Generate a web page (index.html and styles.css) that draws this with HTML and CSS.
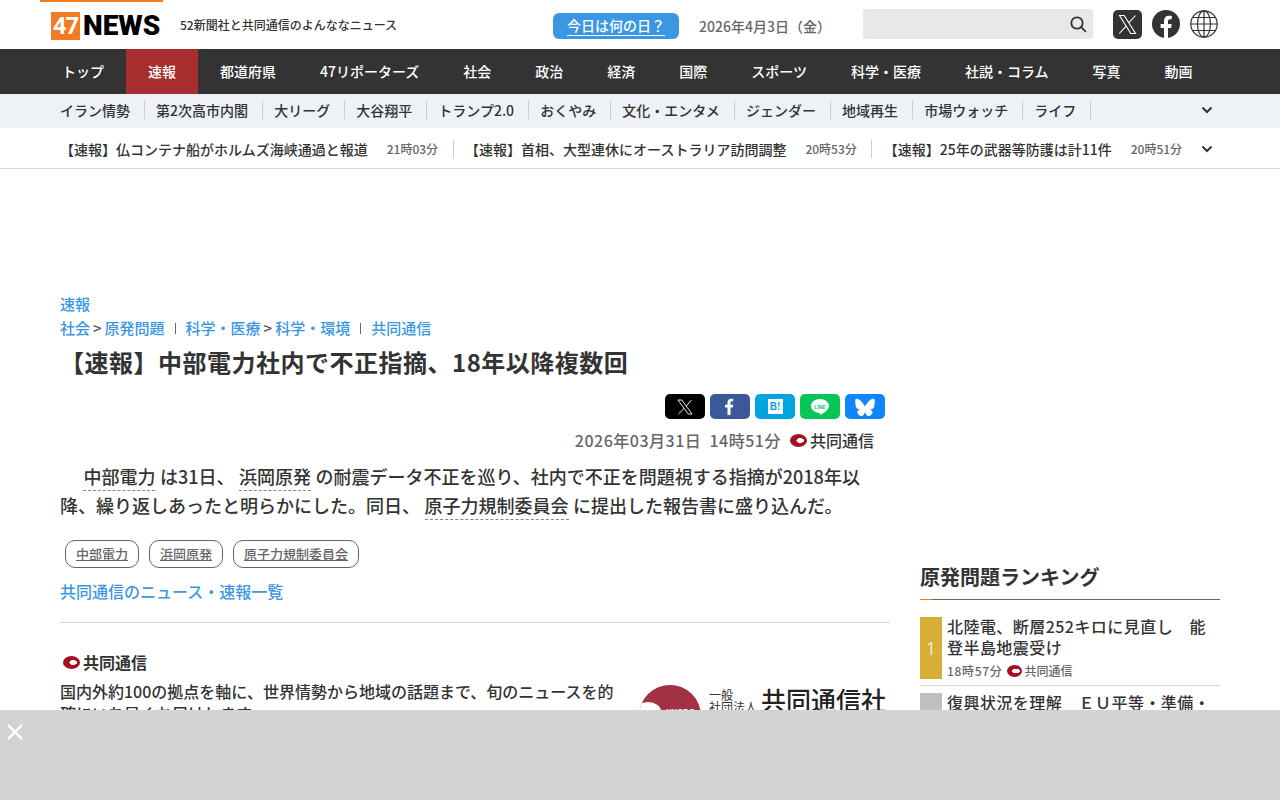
FILE: index.html
```html
<!DOCTYPE html>
<html lang="ja">
<head>
<meta charset="utf-8">
<title>47NEWS</title>
<link rel="stylesheet" href="styles.css">
</head>
<body>
<header class="masthead">
  <div class="logo-wrap">
    <div class="logo"><span class="logo-box">47</span><span class="logo-news">NEWS</span></div>
  </div>
  <p class="tagline">52新聞社と共同通信のよんななニュース</p>
  <a class="today"><span>今日は何の日？</span></a>
  <span class="date">2026年4月3日（金）</span>
  <div class="search">
    <svg width="18" height="18" viewBox="0 0 18 18" fill="none" stroke="#333" stroke-width="1.8"><circle cx="8" cy="8" r="5.7"/><path d="M12.2 12.2 16.4 16.4" stroke-linecap="round"/></svg>
  </div>
  <div class="social">
    <svg width="29" height="29" viewBox="0 0 29 29"><rect width="29" height="29" rx="5" fill="#333"/><path d="M6.500 5.500h4.700l11.300 18h-4.700zM22.500 5.500 15.400 13.200M13.500 15.700 6.300 23.500" fill="none" stroke="#fff" stroke-width="1.100"/></svg>
    <svg width="28" height="28" viewBox="0 0 28 28"><circle cx="14" cy="14" r="14" fill="#333"/><path d="M12 28V18H8.600v-4H12v-3c0-3.500 2-5.300 5.100-5.300 1.400 0 2.700.2 2.700.2v3.400h-1.600c-1.700 0-2.200 1-2.200 2.100V14h3.700l-.6 4h-3.100v10z" fill="#fff"/></svg>
    <svg width="28" height="28" viewBox="0 0 28 28" fill="none" stroke="#333" stroke-width="1.2"><circle cx="14" cy="14" r="13.2"/><ellipse cx="14" cy="14" rx="6.500" ry="13.200"/><path d="M14 .8v26.400M.8 14h26.400M3 7.500h22M3 20.500h22"/></svg>
  </div>
</header>

<nav class="mainnav">
  <a>トップ</a><a class="on">速報</a><a>都道府県</a><a>47リポーターズ</a><a>社会</a><a>政治</a><a>経済</a><a>国際</a><a>スポーツ</a><a>科学・医療</a><a>社説・コラム</a><a>写真</a><a>動画</a>
</nav>

<nav class="subnav">
  <a>イラン情勢</a><a>第2次高市内閣</a><a>大リーグ</a><a>大谷翔平</a><a>トランプ2.0</a><a>おくやみ</a><a>文化・エンタメ</a><a>ジェンダー</a><a>地域再生</a><a>市場ウォッチ</a><a>ライフ</a>
  <svg class="chev" width="12" height="8" viewBox="0 0 12 8" fill="none" stroke="#333" stroke-width="2"><path d="M1.500 1.500 6 6l4.500-4.500"/></svg>
</nav>

<div class="ticker">
  <div class="tick"><b>【速報】仏コンテナ船がホルムズ海峡通過と報道</b><time>21時03分</time></div>
  <div class="tick"><b>【速報】首相、大型連休にオーストラリア訪問調整</b><time>20時53分</time></div>
  <div class="tick last"><b>【速報】25年の武器等防護は計11件</b><time>20時51分</time></div>
  <svg class="chev" width="12" height="8" viewBox="0 0 12 8" fill="none" stroke="#333" stroke-width="2"><path d="M1.500 1.500 6 6l4.500-4.500"/></svg>
</div>

<div class="columns">
  <main class="article">
    <div class="crumb-top"><a>速報</a></div>
    <div class="crumbs"><a>社会</a><i>&gt;</i><a>原発問題</a><u></u><a>科学・医療</a><i>&gt;</i><a>科学・環境</a><u></u><a>共同通信</a></div>
    <h1>【速報】中部電力社内で不正指摘、18年以降複数回</h1>
    <div class="share">
      <span class="sb b-x"><svg width="16" height="16" viewBox="0 0 16 16"><path d="M1 1h3.800l10.200 14h-3.800zM14.600 1 9 7.300M7 9.500 1.400 15" fill="none" stroke="#fff" stroke-width=".9"/></svg></span>
      <span class="sb b-f"><svg width="12" height="17" viewBox="0 0 12 17"><path d="M3.500 17V9.500H1V6.700h2.500V4.600C3.500 2 5 .7 7.300.7c1 0 1.900.1 1.900.1v2.500H8c-1.200 0-1.500.7-1.500 1.500v1.900h2.700l-.4 2.800H6.500V17z" fill="#fff"/></svg></span>
      <span class="sb b-h"><span class="hb">B!</span></span>
      <span class="sb b-l"><svg width="20" height="18" viewBox="0 0 20 18"><path d="M10 1c5 0 9 3 9 7 0 3.500-4.500 7-9 9 .5-1.500.3-2-.8-2.100C4.600 14.500 1 11.500 1 8c0-4 4-7 9-7z" fill="#fff"/><text x="10" y="10.500" class="lt">LINE</text></svg></span>
      <span class="sb b-b"><svg width="20" height="18" viewBox="0 0 20 18"><path d="M4.500 1.800C6.800 3.500 9.200 6.900 10 8.600c.8-1.700 3.200-5.100 5.500-6.800 1.600-1.200 4.300-2.200 4.300.9 0 .6-.4 5.200-.6 5.900-.7 2.500-3.200 3.100-5.500 2.700 4 .7 5 3 2.800 5.200-4.200 4.300-6-1.100-6.500-2.500-.5 1.400-2.300 6.800-6.500 2.500C1.300 14.300 2.300 12 6.300 11.300c-2.300.4-4.800-.2-5.500-2.700C.6 7.900.2 3.300.2 2.700c0-3.100 2.700-2.100 4.300-.9z" fill="#fff"/></svg></span>
    </div>
    <div class="meta"><span class="stamp">2026年03月31日&nbsp;&nbsp;14時51分</span><span class="src"><span class="kyodo"></span>共同通信</span></div>
    <p class="lead"><a>中部電力</a> は31日、 <a>浜岡原発</a> の耐震データ不正を巡り、社内で不正を問題視する指摘が2018年以降、繰り返しあったと明らかにした。同日、 <a>原子力規制委員会</a> に提出した報告書に盛り込んだ。</p>
    <div class="tags"><a>中部電力</a><a>浜岡原発</a><a>原子力規制委員会</a></div>
    <a class="more">共同通信のニュース・速報一覧</a>
    <section class="about">
      <h2><span class="kyodo"></span>共同通信</h2>
      <div class="about-row">
        <p>国内外約100の拠点を軸に、世界情勢から地域の話題まで、旬のニュースを的確にいち早くお届けします。</p>
        <div class="klogo">
          <span class="kdisc"><span class="kword">KYODO</span></span>
          <span class="ksmall">一般<br>社団法人</span>
          <span class="kname">共同通信社</span>
        </div>
      </div>
    </section>
  </main>

  <aside class="side">
    <h2 class="rank-title">原発問題ランキング</h2>
    <article class="rank">
      <div class="num n1">1</div>
      <div class="rank-body">
        <h3>北陸電、断層252キロに見直し　能登半島地震受け</h3>
        <div class="rank-meta"><time>18時57分</time><span class="kyodo sm"></span>共同通信</div>
      </div>
    </article>
    <article class="rank">
      <div class="num n2">2</div>
      <div class="rank-body">
        <h3>復興状況を理解　ＥＵ平等・準備・危機管理担当委員</h3>
      </div>
    </article>
  </aside>
</div>

<div class="overlay"><svg width="18" height="18" viewBox="0 0 18 18" stroke="#fff" stroke-width="2.400"><path d="M2 2l14 14M16 2 2 16"/></svg></div>
</body>
</html>
```

FILE: styles.css
```css
* { box-sizing: border-box; }
html, body { margin: 0; height: 800px; overflow: hidden; background: #fff; }
body { font-family: "Noto Sans CJK JP", "Noto Sans", sans-serif; color: #333; font-weight: 500; }
a { color: inherit; text-decoration: none; }
h1, h2, h3, p { margin: 0; }

.masthead { height: 49px; display: flex; align-items: center; padding-left: 40px; }
.logo-wrap { width: 123px; height: 49px; border-top: 2px solid #f47b20; padding: 10px 0 0 11px; flex: none; }
.logo { display: flex; align-items: center; height: 28px; }
.logo-box { width: 29px; height: 28px; background: #f47b20; color: #fff; font: 700 24px/29px "Roboto", sans-serif; letter-spacing: -1px; text-align: center; }
.logo-news { font: 900 28px/28px "Roboto", sans-serif; color: #000; margin-left: 3px; }
.tagline { font-size: 12px; margin-left: 17px; width: 373px; flex: none; }
.today { width: 126px; height: 26px; background: #3b97e3; border-radius: 6px; color: #fff; font-size: 14px; line-height: 24px; text-align: center; flex: none; margin-top: 2px; }
.today span { display: inline-block; border-bottom: 1px solid #fff; height: 23px; }
.date { width: 184px; padding-left: 20px; font-size: 14px; color: #666; flex: none; margin-top: 2px; }
.search { width: 230px; height: 30px; background: #e8e8e8; border-radius: 3px; display: flex; justify-content: flex-end; align-items: center; padding-right: 6px; flex: none; margin-top: -1px; }
.social { display: flex; gap: 10px; margin-left: 20px; align-items: center; margin-top: -1px; }

.mainnav { height: 45px; background: #333; display: flex; padding-left: 40px; }
.mainnav a { color: #fff; font-size: 14px; line-height: 45px; padding: 0 22px; }
.mainnav a.on { background: #a82d2f; }

.subnav { height: 34px; background: #eef1f6; display: flex; align-items: center; padding: 0 0 2px 47px; position: relative; }
.subnav a { font-size: 14px; line-height: 18px; padding: 0 14px 0 11.100px; border-right: 1px solid #ccc; color: #333; white-space: nowrap; }
.subnav a:first-child { padding-left: 13px; }
.chev { position: absolute; right: 67px; }
.ticker { height: 41px; border-bottom: 1px solid #d8d8d8; display: flex; align-items: center; padding: 1px 0 0 60px; position: relative; }
.tick { display: flex; align-items: center; height: 18px; border-right: 1px solid #ccc; padding-right: 14px; margin-right: 12px; white-space: nowrap; }
.tick.last { border-right: 0; }
.tick b { font-weight: 500; font-size: 14px; color: #333; }
.tick time { font-size: 12px; color: #666; margin-left: 19px; }
.tick:first-child { padding-right: 15px; margin-right: 11px; }
.ticker .chev { top: 17px; }

.columns { display: flex; padding: 123px 60px 0; gap: 30px; }
.article { width: 830px; flex: none; }
.crumb-top, .crumbs { font-size: 15px; line-height: 24px; color: #3b97e3; }
.crumbs { display: flex; align-items: center; }
.crumbs i { font-style: normal; color: #555; margin: 0 3px; }
.crumbs u { width: 1px; height: 11px; background: #666; margin: 0 10px; }
h1 { font-size: 24px; line-height: 36px; font-weight: 700; margin: 4px 0 0; letter-spacing: .5px; }
.share { display: flex; justify-content: flex-end; gap: 5px; margin: 14px 5px 0 0; }
.sb { width: 40px; height: 25px; border-radius: 5px; display: flex; align-items: center; justify-content: center; }
.b-x { background: #000; } .b-f { background: #3b5998; } .b-h { background: #00a4de; } .b-l { background: #06c755; } .b-b { background: #1185fe; }
.hb { width: 15px; height: 15px; background: #fff; color: #00a4de; font: 700 10px/15px "Liberation Sans", sans-serif; text-align: center; }
.lt { font: 700 5px "Liberation Sans", sans-serif; fill: #06c755; text-anchor: middle; }
.meta { display: flex; justify-content: flex-end; align-items: center; font-size: 16px; line-height: 24px; color: #666; margin: 9px 16px 0 0; }
.stamp { letter-spacing: .5px; }
.src { display: flex; align-items: center; color: #333; margin-left: 9px; }
.kyodo { display: inline-block; width: 17px; height: 13px; border-radius: 50%; background: radial-gradient(ellipse 4px 2.500px at 60% 50%, #fff 90%, #a50f1e 100%); margin-right: 3px; flex: none; }
.kyodo.sm { width: 15px; height: 12px; margin: 0 3px 0 4px; }
.lead { font-size: 18px; line-height: 29px; margin-top: 10px; text-indent: 1.3em; word-spacing: .5px; }
.lead a { border-bottom: 1px dashed #888; padding-bottom: 1px; }
.tags { display: flex; gap: 10px; margin: 20px 0 0 5px; }
.tags a { height: 28px; line-height: 26px; padding: 0 10px; border: 1px solid #666; border-radius: 10px; font-size: 13px; color: #666; text-decoration: underline; }
.more { display: block; font-size: 16px; line-height: 24px; color: #3b97e3; margin-top: 11px; }
.about { border-top: 1px solid #d4d4d4; margin-top: 19px; padding-top: 27px; }
.about h2 { font-size: 16px; line-height: 24px; font-weight: 700; display: flex; align-items: center; padding-left: 3px; }
.about-row { display: flex; gap: 19px; margin-top: 6px; }
.about-row p { width: 560px; font-size: 16px; line-height: 22px; flex: none; }
.klogo { width: 250px; height: 60px; display: flex; align-items: flex-start; padding-top: 5px; }
.kdisc { position: relative; width: 62px; height: 62px; border-radius: 50%; background: #a23144; flex: none; overflow: hidden; }
.kdisc::before { content: ""; position: absolute; left: -4px; top: 17px; width: 26px; height: 18px; border-radius: 50%; background: #fff; }
.kword { position: absolute; left: 27px; top: 22px; color: #fff; font: 700 8px/10px "Liberation Sans", sans-serif; }
.ksmall { font-size: 12px; line-height: 12px; margin: 4px 4px 0 8px; white-space: nowrap; font-weight: 400; }
.kname { font-size: 25px; line-height: 30px; color: #222; white-space: nowrap; margin-top: -1px; }

.side { width: 300px; flex: none; padding-top: 270px; }
.rank-title { font-size: 20px; line-height: 30px; font-weight: 700; height: 38px; border-bottom: 1px solid #666; position: relative; }
.rank-title::after { content: ""; position: absolute; left: 0; bottom: -1px; width: 12px; height: 1px; background: #f47b20; }
.rank { display: flex; align-items: flex-start; gap: 5px; padding: 17px 0 5px; border-bottom: 1px solid #d4d4d4; }
.rank + .rank { padding-top: 7px; border: 0; }
.num { width: 22px; flex: none; color: #fff; font: 300 18px "Noto Sans", sans-serif; display: flex; align-items: center; justify-content: center; }
.n1 { background: #d9ae37; height: 62px; }
.n2 { background: #bfbfbf; height: 62px; }
.rank h3 { font-size: 16px; line-height: 21px; font-weight: 500; letter-spacing: .45px; margin-top: -1px; }
.rank-meta { display: flex; align-items: center; font-size: 12px; line-height: 18px; color: #666; margin-top: 4px; }
.rank-meta time { letter-spacing: .7px; }

.overlay { position: fixed; left: 0; right: 0; bottom: 0; height: 90px; background: #d3d3d3; padding: 12px 6px; }
```
